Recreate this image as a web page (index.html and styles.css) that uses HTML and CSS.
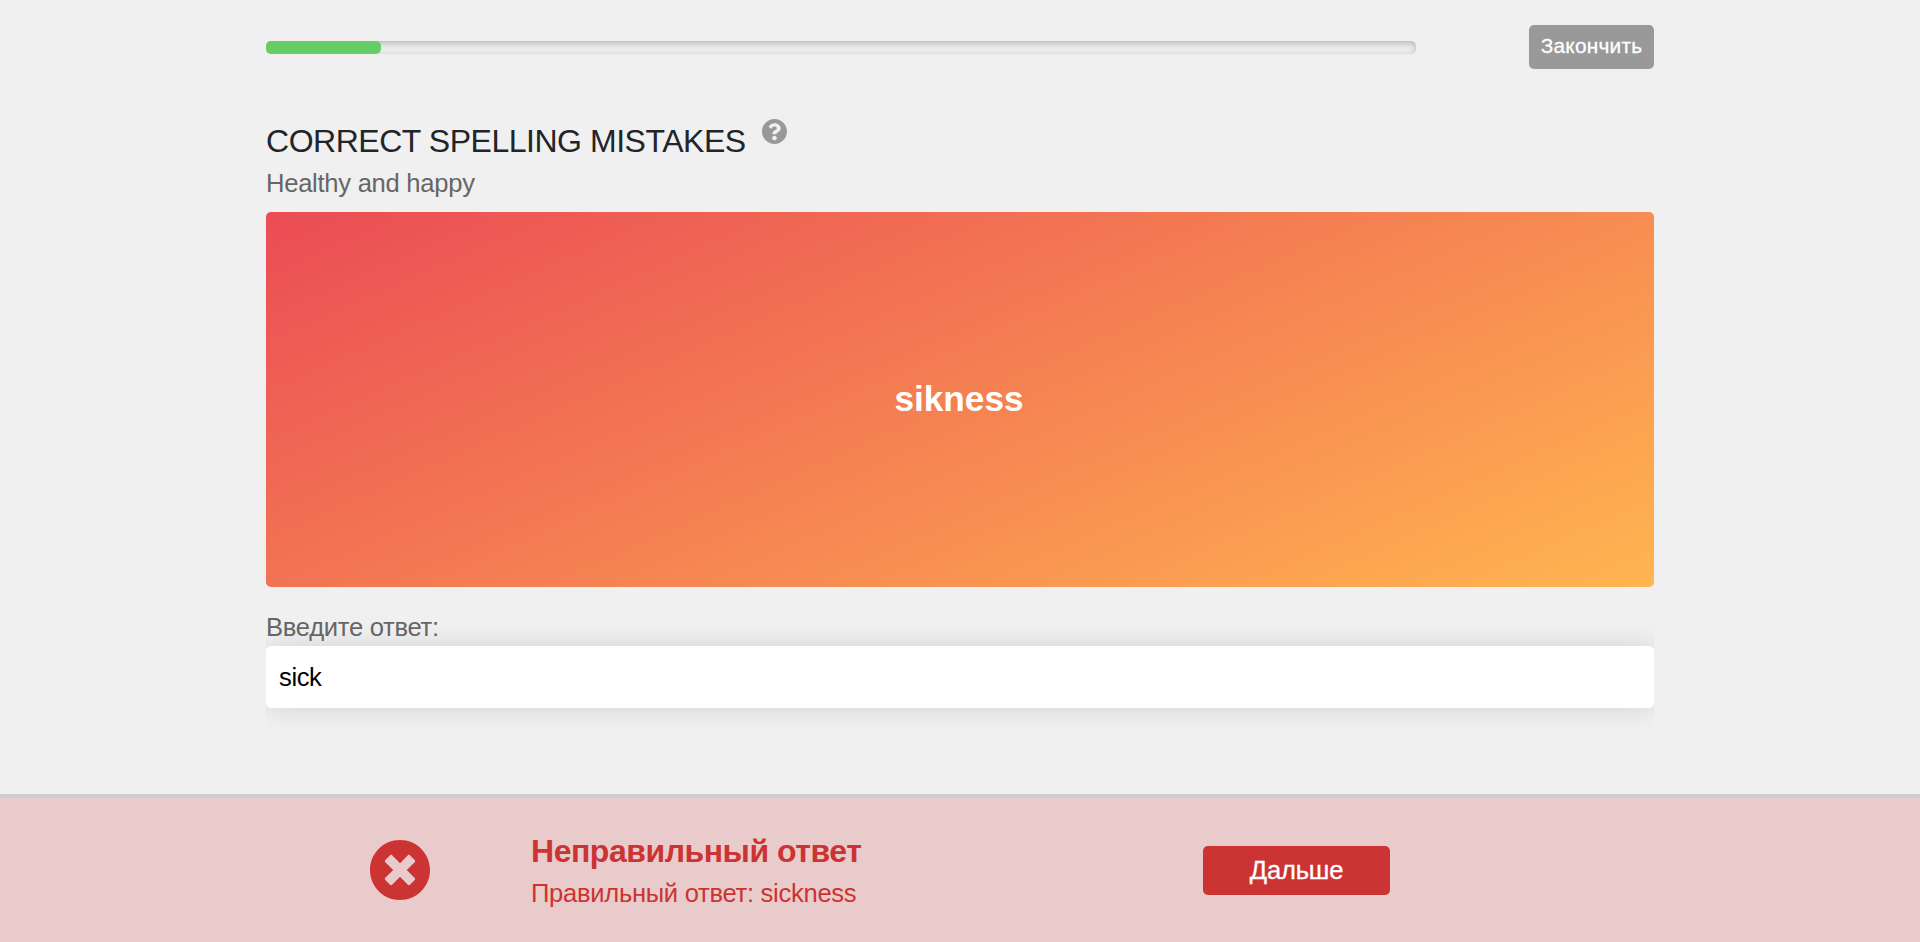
FILE: index.html
```html
<!DOCTYPE html>
<html lang="ru">
<head>
<meta charset="utf-8">
<title>Correct spelling mistakes</title>
<link rel="stylesheet" href="styles.css">
</head>
<body>
<main class="exercise">
  <header class="topbar">
    <div class="progress"><div class="progress-fill" style="width:10%"></div></div>
    <button class="finish">Закончить</button>
  </header>
  <div class="heading">
    <h1 class="title">CORRECT SPELLING MISTAKES</h1>
    <svg class="help" viewBox="8 8 496 496"><path fill="#999" d="M504 256c0 136.997-111.043 248-248 248S8 392.997 8 256C8 119.083 119.043 8 256 8s248 111.083 248 248zM262.655 90c-54.497 0-89.255 22.957-116.549 63.758-3.536 5.286-2.353 12.415 2.715 16.258l34.699 26.31c5.205 3.947 12.621 3.008 16.665-2.122 17.864-22.658 30.113-35.797 57.303-35.797 20.429 0 45.698 13.148 45.698 32.958 0 14.976-12.363 22.667-32.534 33.976C247.128 238.528 216 254.941 216 296v4c0 6.627 5.373 12 12 12h56c6.627 0 12-5.373 12-12v-1.333c0-28.462 83.186-29.647 83.186-106.667 0-58.002-60.165-102-116.531-102zM256 338c-25.365 0-46 20.635-46 46 0 25.364 20.635 46 46 46s46-20.636 46-46c0-25.365-20.635-46-46-46z"/></svg>
  </div>
  <p class="topic">Healthy and happy</p>
  <section class="card"><strong class="word">sikness</strong></section>
  <div class="answer">
    <label class="label" for="answer">Введите ответ:</label>
    <input class="field" id="answer" value="sick">
  </div>
</main>
<footer class="result">
  <svg class="wrong" viewBox="8 8 496 496"><path fill="#c33" d="M256 8C119 8 8 119 8 256s111 248 248 248 248-111 248-248S393 8 256 8zm121.600 313.100c4.700 4.700 4.700 12.300 0 17L338 377.600c-4.700 4.700-12.300 4.700-17 0L256 312l-65.100 65.600c-4.700 4.700-12.300 4.700-17 0L134.400 338c-4.700-4.700-4.700-12.300 0-17l65.600-65-65.600-65.100c-4.700-4.700-4.700-12.300 0-17l39.600-39.600c4.700-4.700 12.300-4.700 17 0l65 65.700 65.100-65.600c4.700-4.700 12.300-4.700 17 0l39.600 39.600c4.700 4.700 4.700 12.300 0 17L312 256l65.600 65.100z"/></svg>
  <div class="message">
    <strong class="verdict">Неправильный ответ</strong>
    <span class="correct">Правильный ответ: sickness</span>
  </div>
  <button class="next">Дальше</button>
</footer>
</body>
</html>
```
FILE: styles.css
```css
* { box-sizing: border-box; }
body {
  margin: 0;
  height: 942px;
  display: flex;
  flex-direction: column;
  overflow: hidden;
  background: #f0f0f0;
  font-family: "Liberation Sans", Arial, sans-serif;
}
button { border: 0; color: #fff; font-family: inherit; padding: 0; }
.exercise { width: 1388px; height: 794px; margin: 0 auto; padding-top: 25px; }
.topbar { display: flex; justify-content: space-between; align-items: center; height: 44px; }
.progress {
  width: 1150px;
  height: 13px;
  border-radius: 5px;
  background: #eee;
  box-shadow: inset 0 2px 6px rgba(0, 0, 0, .25);
}
.progress-fill { height: 100%; border-radius: 5px; background: #6c6; }
.finish {
  width: 125px;
  height: 44px;
  padding-bottom: 2px;
  border-radius: 5px;
  background: #999;
  font-size: 20.8px;
  letter-spacing: .25px;
  -webkit-text-stroke: .3px #fff;
}
.heading { display: flex; align-items: flex-start; gap: 16px; margin-top: 50px; height: 46px; }
.title { margin: 4px 0 0; font-size: 32px; line-height: 37px; font-weight: 400; letter-spacing: -.47px; color: #212529; }
.help { width: 25px; height: 25px; }
.topic { margin: 4px 0 0; height: 43px; font-size: 25.6px; line-height: 29px; letter-spacing: -.28px; color: #666; }
.card {
  display: flex;
  align-items: center;
  justify-content: center;
  height: 375px;
  padding: 0 2px 2px 0;
  border-radius: 5px;
  background: linear-gradient(156deg, #eb4c55, #ffb550);
}
.word { font-size: 35.2px; color: #fff; }
.answer { overflow: hidden; margin-top: 20px; height: 150px; }
.label { display: block; height: 39px; padding-top: 6px; font-size: 25.6px; line-height: 29px; letter-spacing: -.3px; color: #666; }
.field {
  display: block;
  width: 100%;
  height: 62px;
  padding: 1px 13px 0;
  border: 0;
  border-radius: 5px;
  background: #fff;
  box-shadow: 0 0 26px rgba(0, 0, 0, .12);
  font-family: inherit;
  font-size: 25.6px;
  letter-spacing: -.4px;
  color: #000;
}
.result {
  display: flex;
  align-items: center;
  height: 148px;
  padding-left: 370px;
  border-top: 4px solid #ccc;
  background: #e9cbcb;
}
.wrong { width: 60px; height: 60px; }
.message { display: flex; flex-direction: column; gap: 9px; width: 672px; margin: 1px 0 0 101px; color: #c33; }
.verdict { font-size: 32px; line-height: 37px; letter-spacing: -.47px; }
.correct { font-size: 25.6px; line-height: 29px; letter-spacing: -.3px; }
.next {
  width: 187px;
  height: 49px;
  border-radius: 5px;
  background: #c33;
  font-size: 25.6px;
  letter-spacing: -.2px;
  -webkit-text-stroke: .3px #fff;
}
```
